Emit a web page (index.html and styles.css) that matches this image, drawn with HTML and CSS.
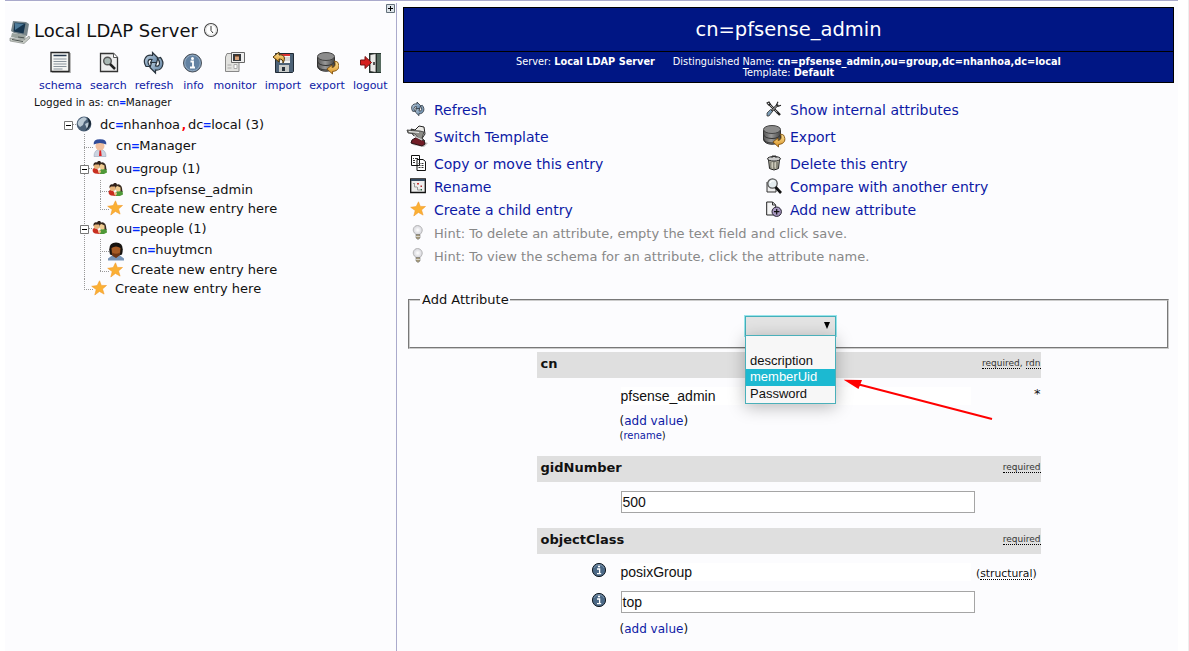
FILE: index.html
```html
<!DOCTYPE html>
<html lang="en">
<head>
<meta charset="utf-8">
<title>phpLDAPadmin</title>
<link rel="stylesheet" href="styles.css">
</head>
<body>
<svg class="defs" aria-hidden="true">
  <defs>
    <linearGradient id="gold" x2="0" y2="1"><stop stop-color="#ffe7a0"/><stop offset="1" stop-color="#d99020"/></linearGradient>
    <linearGradient id="steel" x2="1"><stop stop-color="#555"/><stop offset=".45" stop-color="#999"/><stop offset="1" stop-color="#444"/></linearGradient>
    <linearGradient id="blue" x2="1" y2="1"><stop stop-color="#c4d5e3"/><stop offset="1" stop-color="#54789b"/></linearGradient>
    <radialGradient id="bulb"><stop stop-color="#fff"/><stop offset="1" stop-color="#d4d4da"/></radialGradient>
  </defs>
  <symbol id="refresh" viewBox="0 0 24 24">
    <path d="M4 15.500C0 9 4 3 10.500 4.500V1.500L16 7l-1.500 5H8.500l1.500-3.500Q6.500 7.500 6 11q0 2 2 4.500z" fill="url(#blue)" stroke="#29343e" stroke-width="1.200"/>
    <path d="M18.500 6.500c5 6 1.500 13.500-5 12.500v3L8 16.500l1.500-5h5L13.500 15q3.500 1 4-2.500.3-2.500-2-5z" fill="url(#blue)" stroke="#29343e" stroke-width="1.200"/>
  </symbol>
  <symbol id="export" viewBox="0 0 24 24">
    <path d="M1.500 6v9c0 7 17 7 17 0V6" fill="url(#steel)" stroke="#333"/>
    <path d="M1.500 10c0 6 17 6 17 0M1.500 14.500c0 6 17 6 17 0" fill="none" stroke="#333"/>
    <ellipse cx="10" cy="5.500" rx="8.500" ry="4" fill="#8c8c8c" stroke="#444"/>
    <path d="M18.500 10l3 1c3 5 1 9-5 9.500v2.500L11 18l5-4v2.500c3-.5 4-3 2.500-6.500z" fill="url(#gold)" stroke="#80500c" stroke-width=".9"/>
  </symbol>
  <symbol id="star" viewBox="0 0 16 16">
    <path d="M8.500.800l1.800 4.600 5.200.1-4 3.400 1.600 5.200-4.700-2.700-4.600 3.600 1.400-5.500L.700 6.300l5.500-.7z" fill="#fbb034" stroke="#f19a2c" stroke-width=".6"/>
  </symbol>
  <symbol id="bulbicon" viewBox="0 0 16 16">
    <path d="M6 9.500C1 6 3.500.500 7.500.500s7 5 2.500 9z" fill="url(#bulb)" stroke="#aaa" stroke-width=".8"/>
    <path d="M6 9.500h4V13l-2 1.500L6 13z" fill="#a69a79" stroke="#777" stroke-width=".6"/><path d="M6 11.500h4" stroke="#eee" stroke-width=".7"/>
  </symbol>
  <symbol id="people" viewBox="0 0 16 16">
    <path d="M.8 9Q2 7.500 5 8.500L8 14 3 13.500Q0 12.500 .8 9z" fill="#c82e20"/><path d="M8 10l3-2 3.500 1 .5 3.500-3 1.500H8z" fill="#4f9938"/>
    <circle cx="4.700" cy="6" r="3" fill="#e6b47c"/><path d="M1.500 6C1 3 3 1.800 5 2.500 6 .5 9 .500 9 3l-1 5-1-3.500L3 4.500z" fill="#30211a"/>
    <circle cx="10.500" cy="6.500" r="3" fill="#efcb91"/><path d="M7.500 5C8 1 13 1.500 14 6l.5 4-2-1V5.500L9.500 4z" fill="#3a2c20"/>
    <circle cx="7.500" cy="11.500" r="1.500" fill="#ebc18d"/>
  </symbol>
  <symbol id="info" viewBox="0 0 16 16">
    <circle cx="8" cy="8" r="6.600" fill="#4b6885" stroke="#151d26"/><path d="M3 6a5.400 5.400 0 0 1 10 0" fill="none" stroke="#8aa1b8" stroke-width=".7"/>
    <circle cx="8" cy="4.500" r="1.100" fill="#fff"/><path d="M6 7h2.600v4.500M6 11.700h4.200" stroke="#fff" stroke-width="1.300" fill="none"/>
  </symbol>
</svg>

<div class="page">
  <aside class="sidebar">
    <svg class="collapse" width="9" height="9"><path d="M.5.5h8v8h-8z" fill="#dce3e8" stroke="#64717b"/><path d="M2 4.500h5M4.500 2v5" stroke="#000"/></svg>
    <div class="server">
      <svg width="22" height="24" viewBox="0 0 22 24"><path d="M4 1l13 1 3 2-2 12-13-3-3-2z" fill="#77858a"/><path d="M5.500 2.500l11 1-2 10-10-2z" fill="#17364f"/><path d="M6 3l9 1-9 6z" fill="#4d7a99"/><path d="M3 13l14 2-1 5-14-3z" fill="#9ba49f"/><path d="M1 18l14 2 5-4 1 2-6 5.500L1 21z" fill="#c7cbc5" stroke="#777e79" stroke-width=".6"/><path d="M3 19.500l11 2M9 17l6 .8" stroke="#4e5553"/></svg>
      <span class="server-name">Local LDAP Server</span>
      <svg width="16" height="16" viewBox="0 0 16 16"><circle cx="8" cy="8" r="6.500" fill="#fff" stroke="#444" stroke-width="1.100"/><circle cx="8" cy="8" r="5.200" fill="none" stroke="#ddd"/><path d="M8 4v4.500l2 2.500" fill="none" stroke="#333"/></svg>
    </div>
    <nav class="tools">
      <a><svg width="24" height="24" viewBox="0 0 24 24"><path d="M4 2h19v20H4z" fill="#bbb"/><path d="M3 1.500h18v19H3z" fill="#f4f5f3" stroke="#252525" stroke-width="1.300"/><path d="M5.500 4.500h13" stroke="#27384c" stroke-width="1.500"/><path d="M5.500 8h13M5.500 10.500h13M5.500 13h13M5.500 15.500h13M5.500 18h9" stroke="#8a949c"/></svg>schema</a>
      <a><svg width="24" height="24" viewBox="0 0 24 24"><path d="M4.500 2.500h13l4 4v14h-17z" fill="#eee" stroke="#333" stroke-width="1.300"/><path d="M17.500 2.500v4h4" fill="#fff" stroke="#555"/><circle cx="11.500" cy="10" r="3.800" fill="#a9b8b4" stroke="#555" stroke-width="1.400"/><path d="M14 13l5 5" stroke="#222" stroke-width="2.500"/></svg>search</a>
      <a><svg width="24" height="24"><use href="#refresh"/></svg>refresh</a>
      <a><svg width="24" height="24" viewBox="0 0 24 24"><circle cx="11.500" cy="12" r="9" fill="#6382a2" stroke="#4a5058"/><circle cx="11.500" cy="12" r="7.700" fill="none" stroke="#91a9c0"/><circle cx="11.500" cy="7.500" r="1.500" fill="#fff"/><path d="M9.500 10.500h2.500v6M9 16.500h5" fill="none" stroke="#fff" stroke-width="1.800"/></svg>info</a>
      <a><svg width="24" height="24" viewBox="0 0 24 24"><path d="M4 2.500h12v18H2.500V6z" fill="#e2e2df" stroke="#888"/><path d="M8.500 1.500h13v10h-13z" fill="#eee" stroke="#666"/><path d="M10 3h8v7h-8z" fill="#34383c"/><path d="M12 5h4v4h-4z" fill="#d8a27a"/><path d="M12 4h4v1.500h-4z" fill="#57351d"/><path d="M4.500 14h4M4.500 17h4M11 13.500h3v4h-3z" stroke="#aaa" fill="#fff"/></svg>monitor</a>
      <a><svg width="24" height="24" viewBox="0 0 24 24"><path d="M4.500 2.500h18v18l-1 1h-17z" fill="#4d6277" stroke="#202a34"/><path d="M9 3h10v9H9z" fill="#f4f4f2"/><path d="M9 3h10v2H9z" fill="#d33"/><path d="M9 7h10M9 9h10" stroke="#bbb"/><path d="M8 14h10v7H8z" fill="#c9ccca"/><path d="M11 16h3v4h-3z" fill="#27313b"/><path d="M2 6l6-5v3c5-1 7 3 4 8 0-3-1-4-4-4v3z" fill="url(#gold)" stroke="#51370a"/></svg>import</a>
      <a><svg width="24" height="24"><use href="#export" x="1"/></svg>export</a>
      <a><svg width="24" height="24" viewBox="-1 0 24 24"><path d="M10 2h12v20H10z" fill="#26342e"/><path d="M18 3h4v18h-4z" fill="#566b60"/><path d="M11 3.500l6-1v19l-6-1z" fill="#e9e9e7" stroke="#222" stroke-width=".8"/><path d="M15 11v3" stroke="#222" stroke-width="1.500"/><path d="M1.500 9H6V5.500l6.500 6L6 17.500V14H1.500z" fill="#d51f1f" stroke="#741414"/></svg>logout</a>
    </nav>
    <div class="login">Logged in as: cn<b class="eq">=</b>Manager</div>
    <div class="tree">
      <div class="node n20"><i class="line stub"><svg width="9" height="9"><path d="M.5.500h8v8h-8z" fill="#fff" stroke="#777"/><path d="M2 4.500h5" stroke="#000"/></svg></i><svg class="ico" viewBox="0 0 16 16"><circle cx="8" cy="8" r="7.400" fill="#4c6178"/><path d="M3 4Q8-1 11 3L8 6 7 9 4 11Q0 8 3 4M9 8l4-2 1 4-3 3z" fill="#b9c8d4"/><path d="M11 1Q20 8 9 15Q15 9 11 1z" fill="#182736"/></svg><span class="first">dc<b class="eq">=</b>nhanhoa<b class="comma">,</b>dc<b class="eq">=</b>local (3)</span></div>
      <div class="node n22"><i></i><i class="line vert branch"></i><svg class="ico person" viewBox="0 0 16 18"><path d="M2 18q0-7 6-7t6 7z" fill="#cbd4e1" stroke="#9aa6bb" stroke-width=".6"/><path d="M7.500 11.500h1.500l.7 6H7z" fill="#d22"/><circle cx="8" cy="7.500" r="4.500" fill="#f1c0a0"/><path d="M1.700 6Q1 .700 8 .700T14.300 6Q8 3 1.700 6z" fill="#314c98"/></svg><span>cn<b class="eq">=</b>Manager</span></div>
      <div class="node n24"><i></i><i class="line vert stub"><svg width="9" height="9"><path d="M.5.500h8v8h-8z" fill="#fff" stroke="#777"/><path d="M2 4.500h5" stroke="#000"/></svg></i><svg class="ico"><use href="#people"/></svg><span>ou<b class="eq">=</b>group (1)</span></div>
      <div class="node n19"><i></i><i class="line vert"></i><i class="line vert branch"></i><svg class="ico"><use href="#people"/></svg><span>cn<b class="eq">=</b>pfsense_admin</span></div>
      <div class="node n18"><i></i><i class="line vert"></i><i class="line end"></i><svg class="ico leaf"><use href="#star"/></svg><span class="new">Create new entry here</span></div>
      <div class="node n22"><i></i><i class="line vert stub"><svg width="9" height="9"><path d="M.5.500h8v8h-8z" fill="#fff" stroke="#777"/><path d="M2 4.500h5" stroke="#000"/></svg></i><svg class="ico"><use href="#people"/></svg><span>ou<b class="eq">=</b>people (1)</span></div>
      <div class="node n21"><i></i><i class="line vert"></i><i class="line vert branch"></i><svg class="ico person" viewBox="0 0 16 18"><path d="M0 18v-2l4-3h8l4 3v2z" fill="#7794b7"/><path d="M2 12Q-1 0 8 0T14 12L8 14z" fill="#171310"/><path d="M3.500 5.500q4.500-3 9 0l-.5 6-4 3.500L4 12z" fill="#a75b25"/><path d="M4 10q4 2.500 8 0l-.5 3L8 15.500l-3.500-2z" fill="#6e3514"/></svg><span>cn<b class="eq">=</b>huytmcn</span></div>
      <div class="node n19"><i></i><i class="line vert"></i><i class="line end"></i><svg class="ico leaf"><use href="#star"/></svg><span class="new">Create new entry here</span></div>
      <div class="node n18"><i></i><i class="line end"></i><svg class="ico leaf"><use href="#star"/></svg><span class="new">Create new entry here</span></div>
    </div>
  </aside>

  <main class="content">
    <header class="banner">
      <h1>cn=pfsense_admin</h1>
      <div class="meta">
        <div class="meta-row"><span>Server: <b>Local LDAP Server</b></span><span>Distinguished Name: <b>cn=pfsense_admin,ou=group,dc=nhanhoa,dc=local</b></span></div>
        <div>Template: <b>Default</b></div>
      </div>
    </header>

    <div class="actions">
      <a><svg width="16" height="16"><use href="#refresh"/></svg>Refresh</a>
      <a><svg width="16" height="16" viewBox="0 0 16 16"><path d="M3 3l9 9" stroke="#222" stroke-width="2.400"/><path d="M3.500 3.500l8 8" stroke="#ccc" stroke-width=".8"/><path d="M2 13.500L12 3.500" stroke="#222" stroke-width="2.400"/><path d="M6 9.500l6-6" stroke="#ddd" stroke-width=".9"/><path d="M1 2l2-1 1.500 2.500L2.500 4zM12 .8l-1.500 3 1.500 1.500 3-1" fill="none" stroke="#222" stroke-width="1.100"/><path d="M1 12l3.500-3.500 2 2L3 15H1z" fill="#7f9db5" stroke="#222" stroke-width=".7"/><path d="M11.500 11.500l2.500 2.500" stroke="#222" stroke-width="2.400"/></svg>Show internal attributes</a>
      <a><svg class="big" width="24" height="24" viewBox="0 0 24 24"><path d="M5 19l6-3 11 3-4 4-11-2z" fill="#bbb"/><path d="M6 16l5-3 7 3 1 4-3 2-11-3z" fill="#711d27" stroke="#2a1115"/><path d="M5 5l4 1 4-4 5 1 1 7-4 6-8-5z" fill="#ecebe7" stroke="#222"/><path d="M1 6l13 1 4 1-2 6 3 3-6-2-4-5-7-1z" fill="#8d8d88" stroke="#333" stroke-width=".8"/><path d="M3 7.500l10 1M8 12l8 4" stroke="#eee"/></svg>Switch Template</a>
      <a><svg class="big" width="24" height="24"><use href="#export"/></svg>Export</a>
      <a><svg width="16" height="16" viewBox="0 0 16 16"><path d="M1.500 .500h8v10h-8zM7 4.500h6l2.500 2v9H7z" fill="#fff" stroke="#111"/><path d="M3 3.500h1M5 3.500h3M3 5.500h2M3 7.500h2M8.500 8.500h2M11.500 8.500h2M8.500 10.500h2M11.500 10.500h2M8.500 12.500h2M11.500 12.500h2" stroke="#333"/></svg>Copy or move this entry</a>
      <a><svg width="16" height="16" viewBox="0 0 16 16"><path d="M2.500 4.500h11l-1 9q-4.500 3-9 0z" fill="#bbb9a9" stroke="#222"/><path d="M5 7v6M8 7v7M11 7v6" stroke="#55554a"/><path d="M6 7.500v5M9 7.500v5" stroke="#f0eee0" stroke-width=".7"/><ellipse cx="8" cy="3.800" rx="6.500" ry="2.300" fill="#ccc" stroke="#222"/><path d="M6 3V1h4v2" fill="none" stroke="#333"/></svg>Delete this entry</a>
      <a><svg width="16" height="16" viewBox="0 0 16 16"><path d="M.7 1h14.600v13.500H.7z" fill="#eee" stroke="#111" stroke-width="1.300"/><path d="M1 1h14v2H1z" fill="#34495f"/><path d="M3 5.500h2M4.500 5v4H7M7.500 9v3H10" fill="none" stroke="#999"/><path d="M7 5h2v1.500H7z" fill="#c33"/><path d="M10.500 7.500H12V9h-1.500z" fill="#a33"/><path d="M10.500 11H12v1.500h-1.500z" fill="#275c36"/></svg>Rename</a>
      <a><svg width="16" height="16" viewBox="0 0 16 16"><path d="M1 4v10h9V4" fill="#eee" stroke="#333"/><circle cx="6.500" cy="5.500" r="4.700" fill="#e3ebee" stroke="#555" stroke-width="1.300"/><path d="M4 5q1-3 4-2" fill="none" stroke="#fff" stroke-width="1.200"/><path d="M9.500 9l5.500 6" stroke="#111" stroke-width="2.600"/></svg>Compare with another entry</a>
      <a><svg width="16" height="16"><use href="#star"/></svg>Create a child entry</a>
      <a><svg width="16" height="16" viewBox="0 0 16 16"><path d="M.7 1h6l3 3v10h-9z" fill="#f5f5f5" stroke="#222"/><path d="M6.500 1v3h3" fill="none" stroke="#333"/><circle cx="10.700" cy="10.700" r="4.700" fill="#a797bf" stroke="#252030"/><path d="M8 10.700h5.400M10.700 8v5.400" stroke="#111" stroke-width="1.200"/></svg>Add new attribute</a>
      <p class="hint"><svg width="16" height="16"><use href="#bulbicon"/></svg>Hint: To delete an attribute, empty the text field and click save.</p>
      <p class="hint"><svg width="16" height="16"><use href="#bulbicon"/></svg>Hint: To view the schema for an attribute, click the attribute name.</p>
    </div>

    <fieldset class="add">
      <legend>Add Attribute</legend>
      <div class="picker">
        <div class="picker-box"><svg width="6" height="7"><path d="M0 0h6L3 7z"/></svg></div>
        <div class="options"><div class="blank"></div><div>description</div><div class="selected">memberUid</div><div>Password</div></div>
        <svg class="arrow" width="152" height="44"><path d="M15 5.500L148 40" stroke="#f00" stroke-width="2"/><path d="M-.5.800l18.500.2-3.500 9z" fill="#f00"/></svg>
      </div>
    </fieldset>

    <div class="attrs">
      <div class="head"><b>cn</b><small><u>required</u>, <u>rdn</u></small></div>
      <div class="body cn-body">
        <div class="row"><span class="plain">pfsense_admin</span><span class="star">*</span></div>
        <div class="add-value">(<a>add value</a>)</div>
        <div class="rename">(<a>rename</a>)</div>
      </div>
      <div class="head"><b>gidNumber</b><small><u>required</u></small></div>
      <div class="body gid-body"><div class="row"><span class="field">500</span></div></div>
      <div class="head"><b>objectClass</b><small><u>required</u></small></div>
      <div class="body oc-body">
        <div class="row"><svg class="ib" width="16" height="16"><use href="#info"/></svg><span class="plain">posixGroup</span><span class="structural">(<u>structural</u>)</span></div>
        <div class="row"><svg class="ib" width="16" height="16"><use href="#info"/></svg><span class="field">top</span></div>
        <div class="add-value">(<a>add value</a>)</div>
      </div>
    </div>
  </main>
</div>
</body>
</html>
```
FILE: styles.css
```css
* { box-sizing: border-box; }
body { margin: 0; height: 651px; overflow: hidden; background: #fff; border-right: 1px solid #eee; font: 13px "DejaVu Sans", sans-serif; color: #111; }
.defs { position: absolute; width: 0; height: 0; }
svg { flex: none; display: block; }
a { color: #0d1aa5; }
.page { display: flex; margin-left: 5px; width: 1173px; height: 651px; border-top: 1px solid #aac; padding-top: 2px; background: linear-gradient(#fff 2px, #fcfcfe 2px); }
.sidebar { position: relative; width: 392px; border-right: 1px solid #aac; padding-top: 12px; white-space: nowrap; }
.collapse { position: absolute; right: 1px; top: 1px; }

.server { display: flex; align-items: center; height: 30px; padding-left: 4px; }
.server svg:first-child { margin-top: 3px; }
.server-name { font-size: 18px; margin: 0 5px 0 3px; }
.tools { display: flex; gap: 8.1px; padding: 6px 0 0 34px; height: 48px; font-size: 11px; line-height: 22px; }
.tools a { display: flex; flex-direction: column; align-items: center; height: 42px; }
.login { height: 21px; padding-left: 29px; line-height: 18px; font-size: 10.45px; }
.eq, .comma { font-family: "DejaVu Sans Mono", monospace; color: #0028ff; }
.comma { color: #f00; }

.tree { padding-left: 56px; }
.node { display: flex; align-items: center; }
.node i { width: 16px; align-self: stretch; flex: none; display: flex; align-items: center; padding: 2px 0 0 3px; }
.n18 { height: 18px; }
.n19 { height: 19px; }
.n20 { height: 20px; }
.n21 { height: 21px; }
.n22 { height: 22px; }
.n24 { height: 24px; }
.line { --v: repeating-linear-gradient(#999 0 1px, transparent 1px 2px); --h: repeating-linear-gradient(90deg, #999 0 1px, transparent 1px 2px); }
.vert { background: var(--v) 7px 0 / 1px 100% no-repeat; }
.stub { background: var(--h) 12px 50% / 4px 1px no-repeat; }
.vert.stub { background: var(--v) 7px 0 / 1px 100% no-repeat, var(--h) 12px 50% / 4px 1px no-repeat; }
.branch { background: var(--v) 7px 0 / 1px 100% no-repeat, var(--h) 7px 60% / 9px 1px no-repeat; }
.end { background: var(--v) 7px 0 / 1px 60% no-repeat, var(--h) 7px 60% / 9px 1px no-repeat; }
.ico { width: 16px; height: 16px; margin: 0 1px 0 -1px; }
.ico.leaf { margin: 0 2px 0 -2px; }
.ico.person { height: 19px; margin-top: 4px; }
.node span { margin-left: 7px; }
.node .new { margin-left: 6px; }

.content { width: 781px; padding: 4px 4px 0 6px; }
.banner { width: 771px; height: 76px; border: 1px solid #000; background: #001684; color: #fff; text-align: center; }
.banner h1 { margin: 0; height: 44px; border-bottom: 1px solid #000; font-weight: 400; font-size: 19.5px; line-height: 43px; }
.meta { padding-top: 4px; font-size: 9.75px; line-height: 11px; }
.meta-row { display: flex; justify-content: center; gap: 18px; }

.actions { display: grid; grid-template-columns: 356px 1fr; grid-template-rows: 25px 29px 25px 22px 24px 23px 23px; padding: 14px 0 0 7px; font-size: 14px; }
.actions a, .hint { display: flex; align-items: center; gap: 8px; margin: 0; }
.actions svg { margin: -2px 0 0; }
.actions .big { margin: -2px -4px 0 -4px; }
.hint { grid-column: 1 / -1; color: #888; font-size: 13px; }

.add { margin: 24px 0 0 5px; padding: 0; width: 761px; height: 57px; border: 2px groove #ccc; }
.add legend { margin-left: 10px; padding: 0 1px 0 2px; line-height: 16px; }
.picker { position: relative; width: 91px; margin: 8px 0 0 335px; font: 13px "Liberation Sans", sans-serif; }
.picker-box { display: flex; justify-content: flex-end; height: 20px; padding: 5px 5px; border: 1px solid #45b0ba; background: #e3e3e3; box-shadow: 0 0 0 1px rgba(70, 210, 220, .55); }
.options { position: absolute; z-index: 2; top: 19px; left: 0; width: 91px; height: 69px; border: 1px solid #4ab0ba; background: #f7f7f7; box-shadow: 0 3px 16px rgba(0, 0, 0, .28); }
.options div { height: 17px; padding-left: 4px; line-height: 17px; }
.options .blank { height: 16px; }
.options .selected { background: #1cb9d1; color: #fff; line-height: 15px; }
.options div:last-child { line-height: 15px; }
.arrow { position: absolute; z-index: 3; left: 99px; top: 63px; }

.attrs { width: 504px; margin: 3px 0 0 134px; }
.head { display: flex; justify-content: space-between; height: 26px; padding: 4px 0 0 3.5px; background: #dfdfdf; line-height: 15px; }
.head small { padding-top: 1px; margin-right: .5px; font-size: 9px; line-height: 12px; color: #333; }
u { text-decoration: none; border-bottom: 1px dotted #000; }
.head u { display: inline-block; line-height: 10px; }
.row { display: flex; padding-left: 84px; }
.body .ib { margin: -1px 14px 0 -30px; }
.plain, .field { width: 354px; font: 14px "Liberation Sans", sans-serif; color: #111; }
.plain { width: 350px; height: 18px; line-height: 18px; background: #fff; text-indent: -.5px; }
.field { height: 22px; border: 1px solid #a5a5a5; background: #fff; padding-left: 1px; line-height: 21px; text-indent: -.5px; }
.cn-body { height: 78px; padding-top: 9px; }
.star { margin: -1px .5px 0 auto; }
.add-value { padding: 8px 0 0 82.5px; font-size: 12px; line-height: 16px; }
.rename { padding-left: 82.5px; font-size: 10px; line-height: 14px; }
.gid-body { height: 46px; padding-top: 9px; }
.oc-body { padding-top: 9px; }
.oc-body .row { height: 18px; }
.oc-body .row + .row { height: 22px; margin-top: 10px; }
.oc-body .row + .row .ib { margin-top: 1px; }
.structural { margin-left: 5px; font-size: 10.8px; line-height: 22px; }
.structural u { display: inline-block; line-height: 11px; }
```
